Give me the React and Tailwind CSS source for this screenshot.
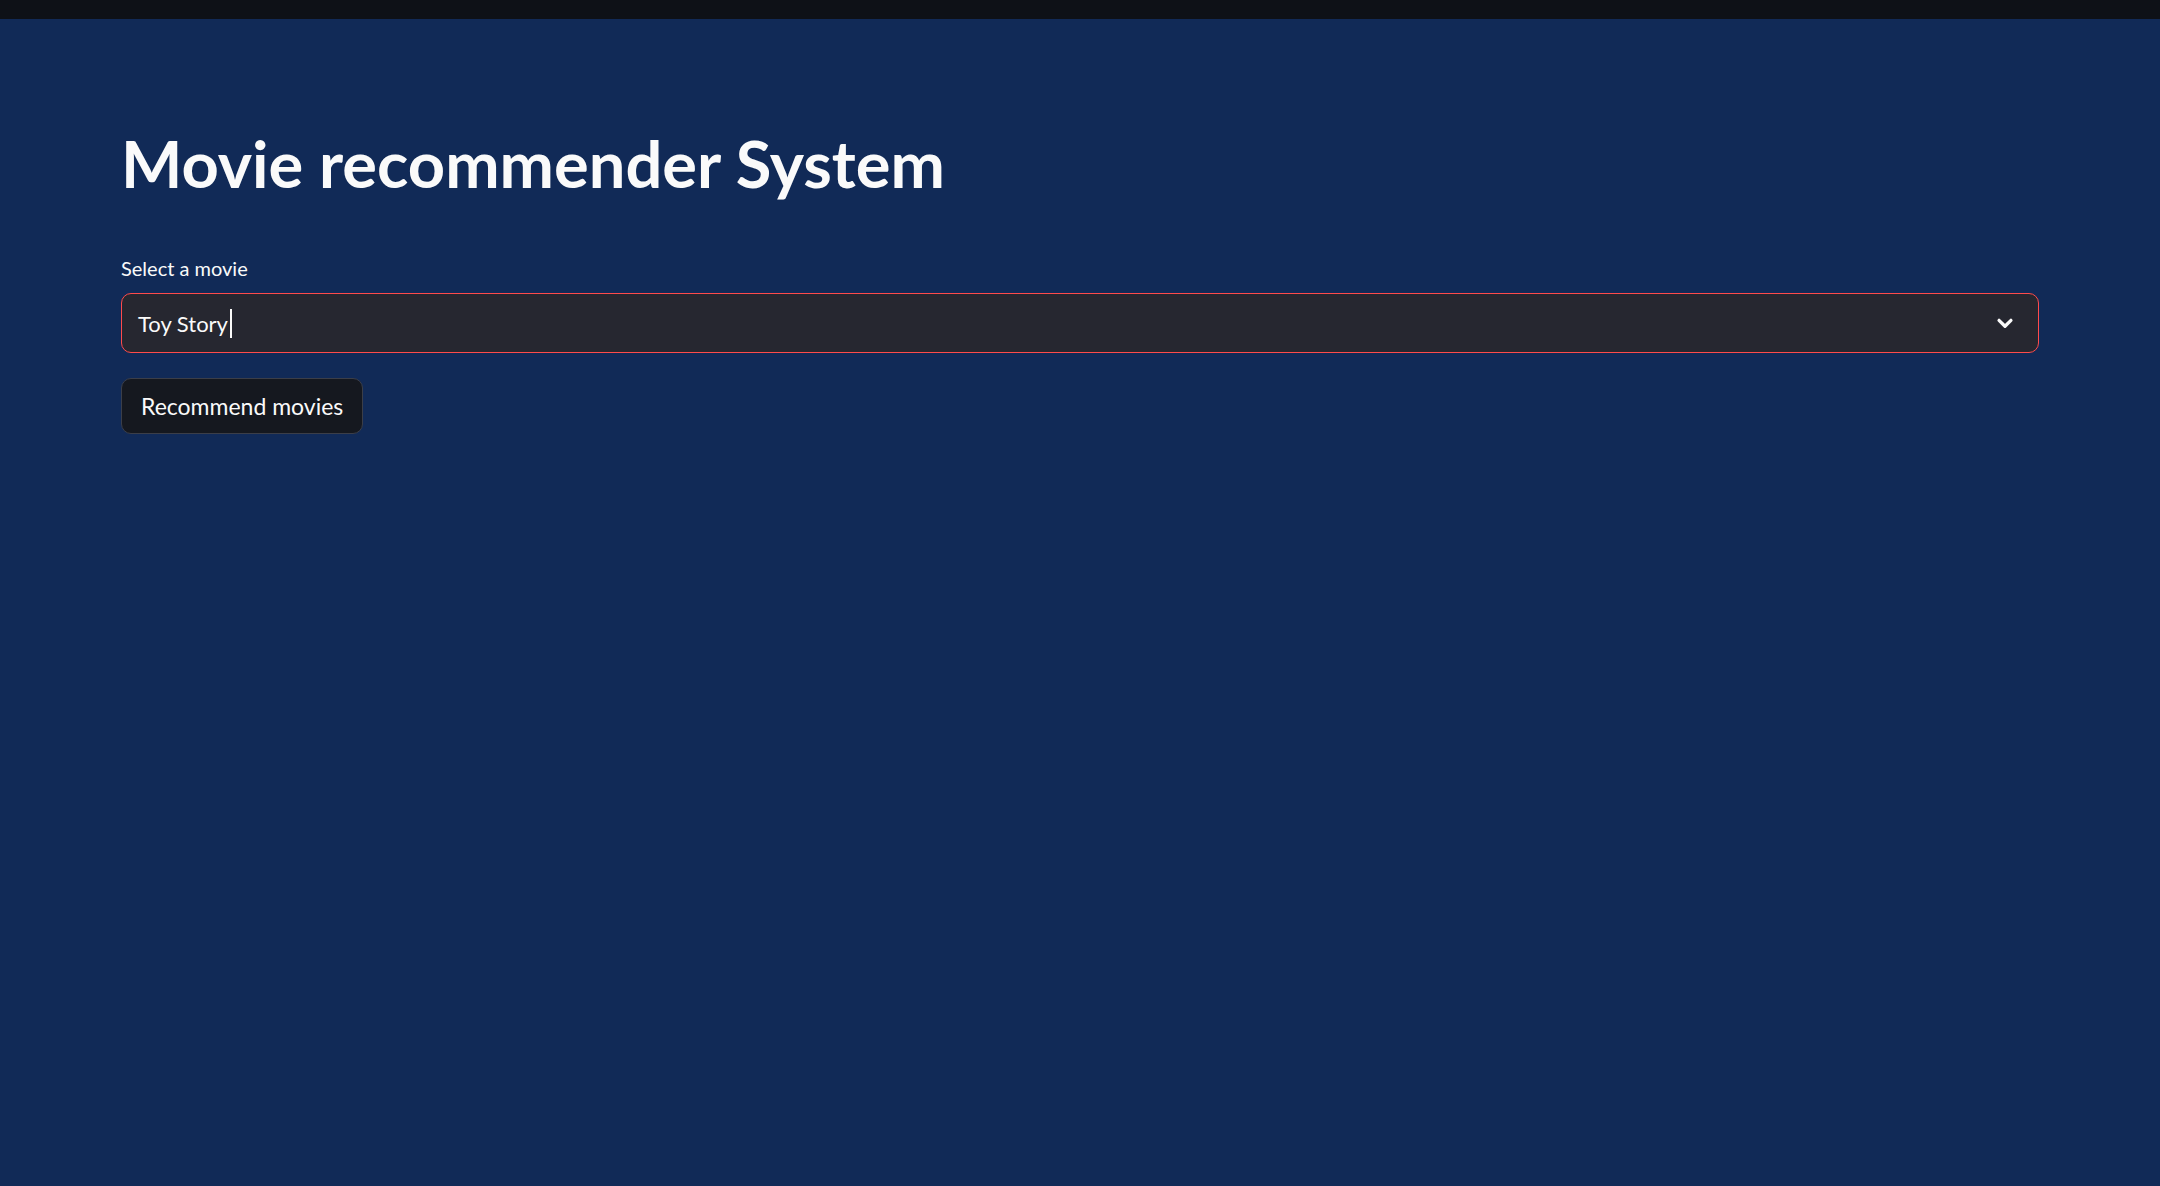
export default function App() {
  return (
    <div className="min-h-[1186px] w-full bg-[#112a57]" style={{ fontFamily: '"Lato", "Liberation Sans", sans-serif' }}>
      <div className="h-[19px] w-full bg-[#0e1117]" />
      <div className="px-[121px] pt-[112px]">
        <h1 className="text-[65px] font-bold leading-none text-[#fafafa]">Movie recommender System</h1>
        <div className="mt-[62px] text-[20px] leading-none text-[#fafafa]">Select a movie</div>
        <div className="mt-[15px] flex h-[60px] items-center justify-between rounded-[10px] border border-[#ff4b4b] bg-[#262730] pl-[16px] pr-[20px]">
          <div className="flex items-center text-[22px] text-[#fafafa]">
            <span>Toy Story</span>
            <span className="ml-[2px] inline-block h-[29px] w-[2px] bg-[#fafafa]" />
          </div>
          <svg width="26" height="26" viewBox="0 0 24 24" fill="none" stroke="#fafafa" strokeWidth="3" strokeLinecap="round" strokeLinejoin="round">
            <path d="M6.5 9.5l5.5 5.5 5.5-5.5" />
          </svg>
        </div>
        <button className="mt-[25px] flex h-[56px] items-center rounded-[10px] border border-[#3b3e48] bg-[#15181f] px-[19px] text-[23px] text-[#fafafa]">
          Recommend movies
        </button>
      </div>
    </div>
  );
}
